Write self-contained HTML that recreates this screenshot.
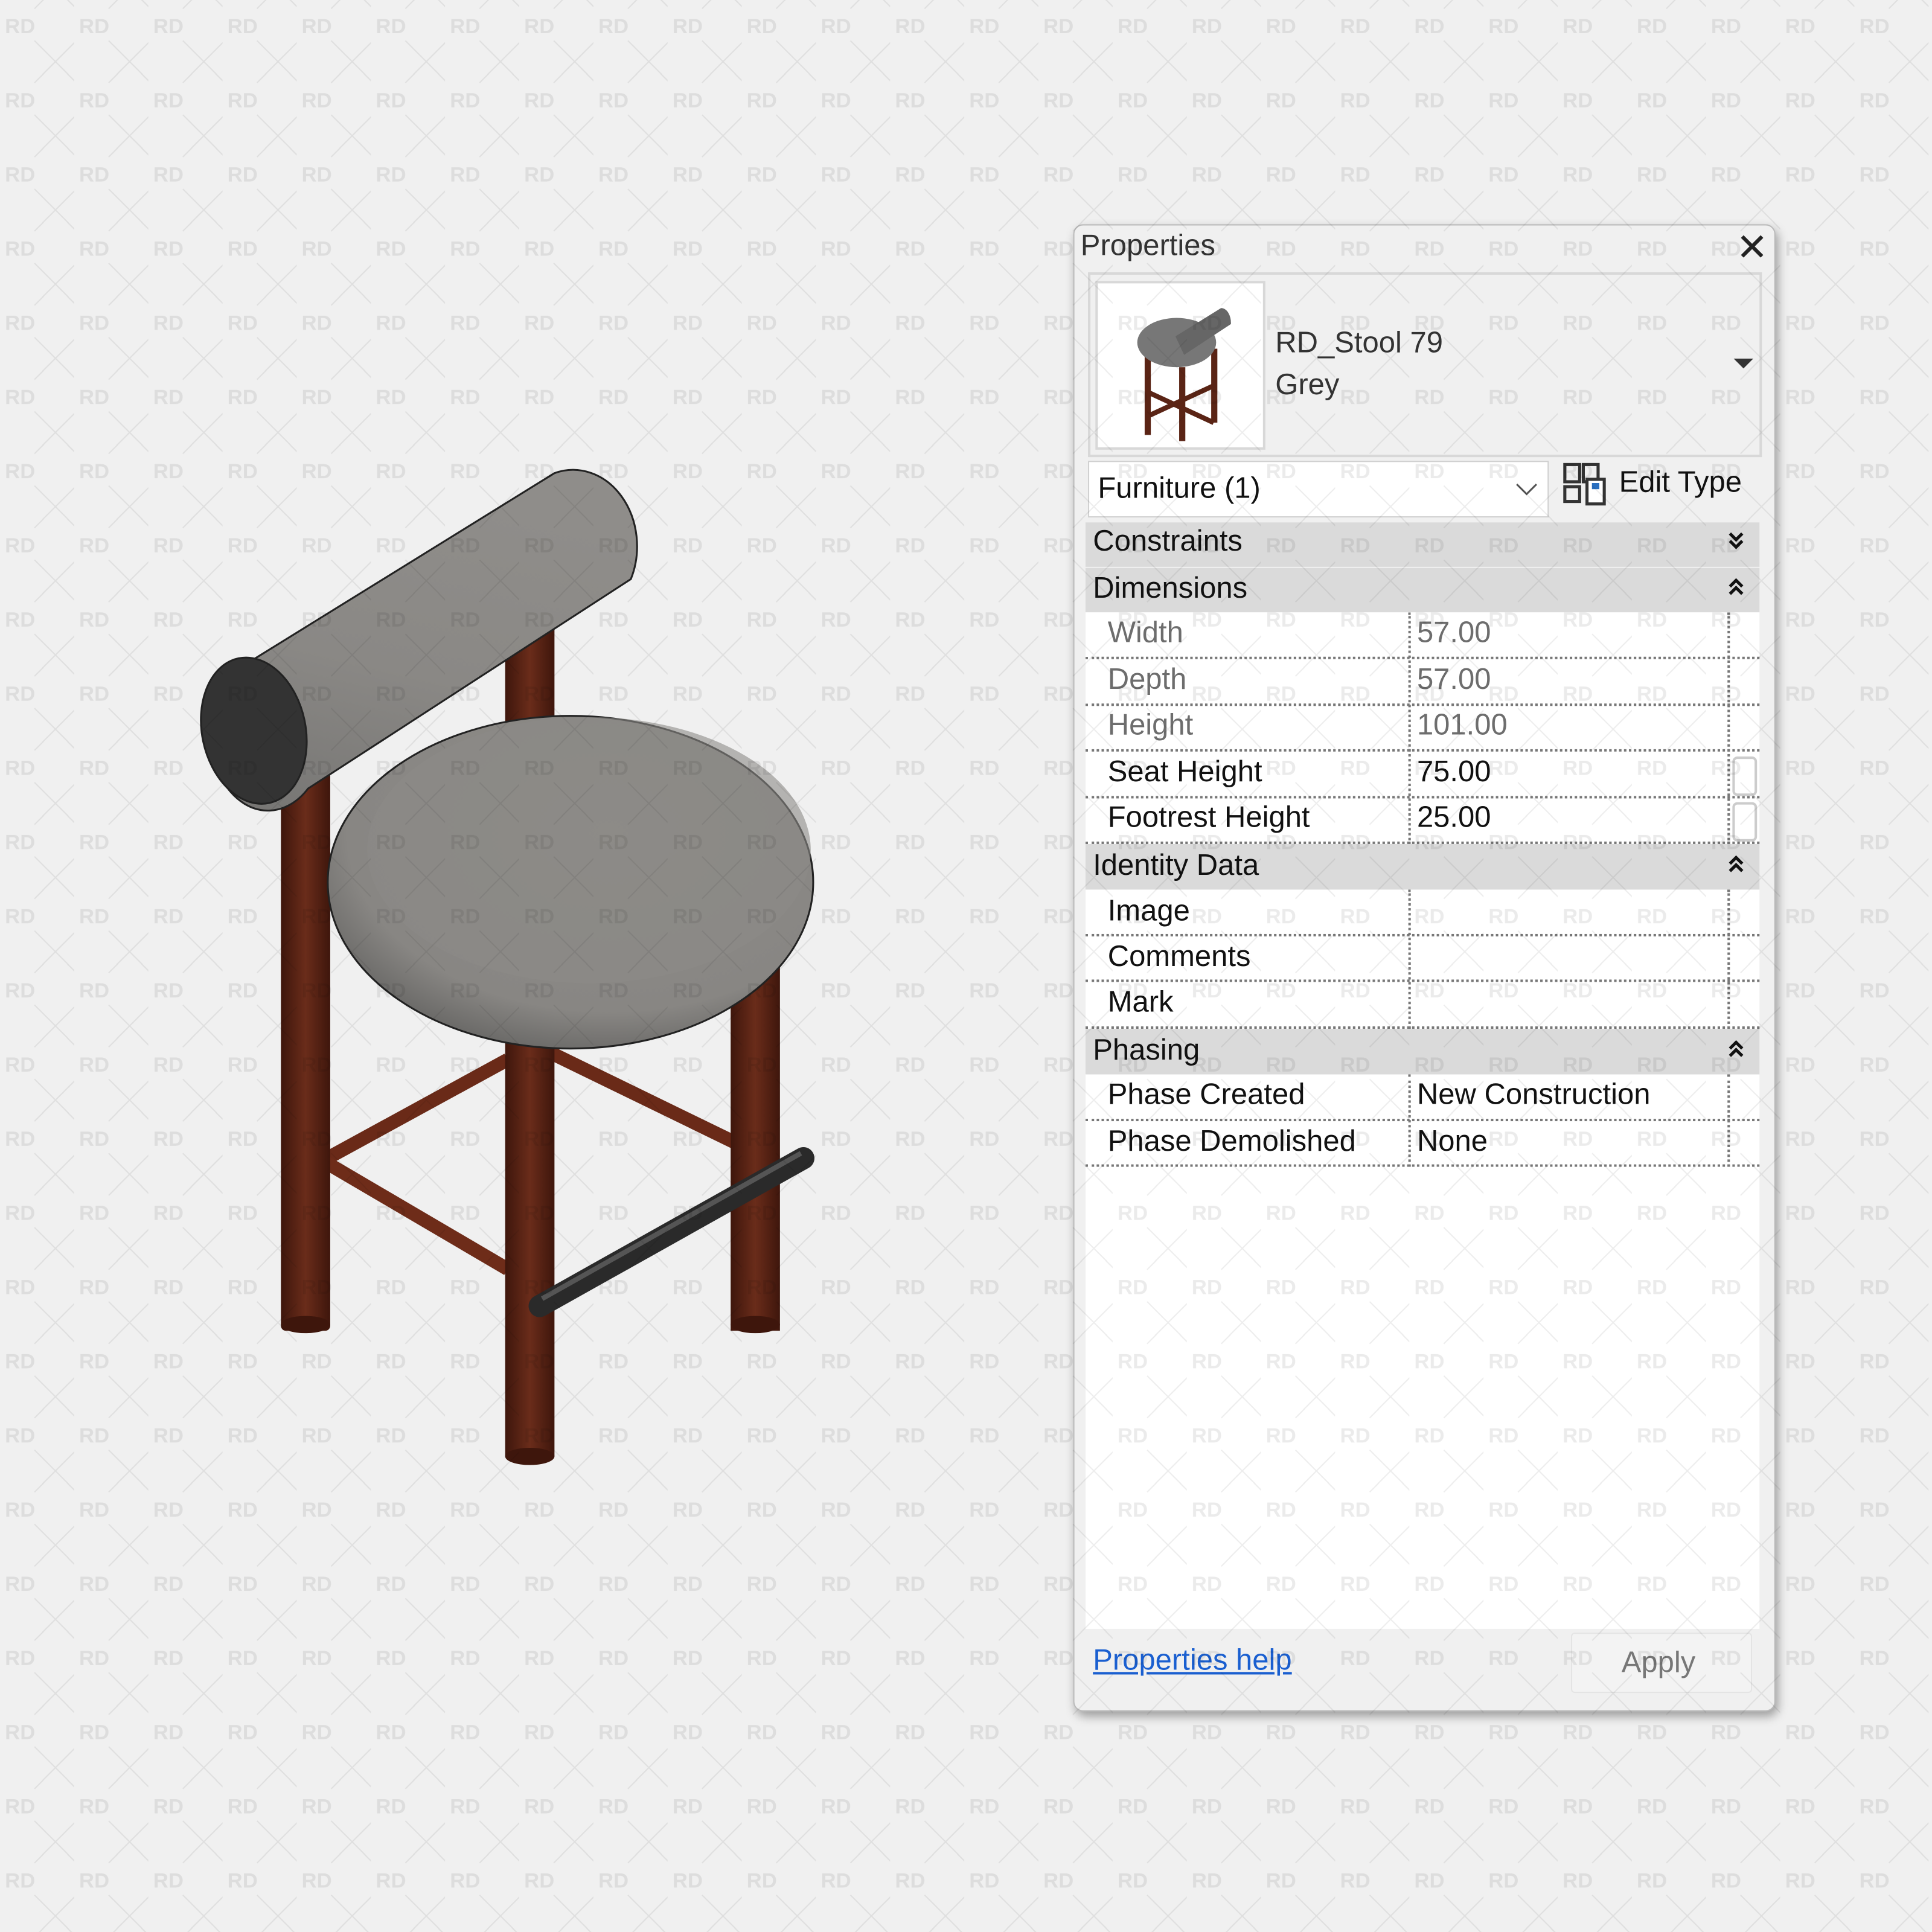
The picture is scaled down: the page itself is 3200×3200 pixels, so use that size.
<!DOCTYPE html>
<html><head><meta charset="utf-8"><style>
html,body{margin:0;padding:0;}
body{width:3200px;height:3200px;overflow:hidden;background:#f0f0f0;}
#w{position:absolute;left:0;top:0;width:1568px;height:1568px;transform:scale(2.040816);transform-origin:0 0;font-family:"Liberation Sans",sans-serif;}
.a{position:absolute;}
.t{position:absolute;font-size:24px;color:#111;white-space:nowrap;line-height:1;}
.g{color:#6d6d6d;}
.hdr{position:absolute;left:881px;width:547px;background:#dadada;}
.row{position:absolute;left:881px;width:547px;background:#fff;border-bottom:2px dotted #777;box-sizing:border-box;}
.vl{position:absolute;left:1143px;border-left:2px dotted #777;}
.vr{position:absolute;left:1402px;border-left:2px dotted #777;}
.ch{position:absolute;left:1402px;}
</style></head><body><div id="w">

<svg class="a" style="left:0;top:0" width="1568" height="1568" viewBox="0 0 1568 1568">
<defs>
<linearGradient id="wood" x1="0" x2="1"><stop offset="0" stop-color="#3e160c"/><stop offset="0.5" stop-color="#6a2c1a"/><stop offset="1" stop-color="#3e160c"/></linearGradient>
<radialGradient id="seat" cx="0.58" cy="0.35" r="0.75"><stop offset="0" stop-color="#8e8c88"/><stop offset="0.72" stop-color="#888683"/><stop offset="0.9" stop-color="#6a6967"/><stop offset="1" stop-color="#3c3c3b"/></radialGradient>
<linearGradient id="cyl" x1="0" y1="1" x2="0.3" y2="0"><stop offset="0" stop-color="#767573"/><stop offset="0.5" stop-color="#8a8885"/><stop offset="1" stop-color="#8f8d8a"/></linearGradient>
</defs>
<rect x="410" y="500" width="40" height="120" fill="url(#wood)"/>
<line x1="262" y1="942" x2="412" y2="860" stroke="#6a2a18" stroke-width="11"/>
<line x1="448" y1="855" x2="598" y2="928" stroke="#6a2a18" stroke-width="11"/>
<line x1="262" y1="942" x2="412" y2="1030" stroke="#6e2c19" stroke-width="11"/>
<rect x="228" y="600" width="40" height="480" rx="4" fill="url(#wood)"/>
<ellipse cx="248" cy="1075" rx="20" ry="7" fill="#3e160c"/>
<rect x="593" y="760" width="40" height="320" fill="url(#wood)"/>
<ellipse cx="613" cy="1075" rx="20" ry="7" fill="#3e160c"/>
<rect x="410" y="820" width="40" height="362" fill="url(#wood)"/>
<ellipse cx="430" cy="1182" rx="20" ry="7" fill="#3e160c"/>
<line x1="438" y1="1060" x2="652" y2="940" stroke="#2a2a2a" stroke-width="18" stroke-linecap="round"/>
<line x1="440" y1="1054" x2="650" y2="936" stroke="#555" stroke-width="4"/>
<path d="M185,548 L450,384 A52,62 0 0 1 512,470 L250,640 A44,60 0 0 1 185,548 Z" fill="url(#cyl)" stroke="#222" stroke-width="1.5"/>
<ellipse cx="206" cy="593" rx="42" ry="60" transform="rotate(-12 206 593)" fill="#333" stroke="#222" stroke-width="1.5"/>
<ellipse cx="463" cy="716" rx="197" ry="135" fill="url(#seat)" stroke="#222" stroke-width="1.5"/>
<ellipse cx="478" cy="690" rx="180" ry="108" fill="#8c8a87" opacity="0.6"/>
</svg>

<div class="a" style="left:871px;top:182px;width:568px;height:1205px;background:#f0f0f0;border:1px solid #bbb;border-radius:8px;box-shadow:2px 4px 8px rgba(0,0,0,0.35);"></div>
<div class="t" style="left:877px;top:188px;color:#333">Properties</div>
<svg class="a" style="left:1411px;top:189px" width="22" height="22"><path d="M3,3 L19,19 M19,3 L3,19" stroke="#222" stroke-width="3"/></svg>
<div class="a" style="left:883px;top:221px;width:543px;height:146px;border:2px solid #d8d8d8;"></div>
<div class="a" style="left:889px;top:228px;width:134px;height:133px;background:#fff;border:2px solid #d8d8d8;"></div>
<svg class="a" style="left:889px;top:228px" width="136" height="135">
<rect x="40" y="60" width="5" height="65" fill="#5a2415"/><rect x="94" y="55" width="5" height="60" fill="#5a2415"/><rect x="68" y="70" width="5" height="60" fill="#5a2415"/>
<line x1="42" y1="90" x2="96" y2="115" stroke="#5a2415" stroke-width="4"/><line x1="42" y1="110" x2="96" y2="85" stroke="#5a2415" stroke-width="4"/>
<ellipse cx="66" cy="50" rx="32" ry="20" fill="#777"/>
<path d="M65,45 L102,22 A8,12 0 0 1 110,35 L72,60 Z" fill="#666"/>
</svg>
<div class="t" style="left:1035px;top:267px;color:#333">RD_Stool 79</div>
<div class="t" style="left:1035px;top:301px;color:#333">Grey</div>
<svg class="a" style="left:1407px;top:291px" width="18" height="10"><path d="M0,0 L16,0 L8,8 Z" fill="#333"/></svg>

<div class="a" style="left:883px;top:374px;width:372px;height:44px;background:#fff;border:1px solid #d0d0d0;"></div>
<div class="t" style="left:891px;top:385px">Furniture (1)</div>
<svg class="a" style="left:1229px;top:390px" width="20" height="14"><path d="M2,3 L10,11 L18,3" stroke="#555" stroke-width="1.5" fill="none"/></svg>
<svg class="a" style="left:1268px;top:375px" width="38" height="36"><rect x="2" y="2" width="12" height="14" fill="none" stroke="#333" stroke-width="2.5"/><rect x="2" y="20" width="12" height="12" fill="none" stroke="#333" stroke-width="2.5"/><rect x="17" y="2" width="12" height="14" fill="none" stroke="#333" stroke-width="2.5"/><rect x="20" y="14" width="14" height="20" fill="#fff" stroke="#333" stroke-width="2.5"/><rect x="24" y="17" width="6" height="5" fill="#2a6fc0"/></svg>
<div class="t" style="left:1314px;top:380px">Edit Type</div>

<div class="hdr" style="top:424px;height:36px"></div><div class="t" style="left:887px;top:428px">Constraints</div>
<svg class="ch" style="top:431px" width="14" height="16"><path d="M2,2 L7,7 L12,2 M2,8 L7,13 L12,8" stroke="#111" stroke-width="2.5" fill="none"/></svg>
<div class="hdr" style="top:461px;height:36px"></div><div class="t" style="left:887px;top:466px">Dimensions</div>
<svg class="ch" style="top:469px" width="14" height="16"><path d="M2,7 L7,2 L12,7 M2,13 L7,8 L12,13" stroke="#111" stroke-width="2.5" fill="none"/></svg>

<div class="row" style="top:497px;height:38px"></div><div class="t g" style="left:899px;top:502px">Width</div><div class="t g" style="left:1150px;top:502px">57.00</div>
<div class="row" style="top:535px;height:38px"></div><div class="t g" style="left:899px;top:540px">Depth</div><div class="t g" style="left:1150px;top:540px">57.00</div>
<div class="row" style="top:573px;height:37px"></div><div class="t g" style="left:899px;top:577px">Height</div><div class="t g" style="left:1150px;top:577px">101.00</div>
<div class="row" style="top:610px;height:38px"></div><div class="t" style="left:899px;top:615px">Seat Height</div><div class="t" style="left:1150px;top:615px">75.00</div>
<div class="row" style="top:648px;height:37px"></div><div class="t" style="left:899px;top:652px">Footrest Height</div><div class="t" style="left:1150px;top:652px">25.00</div>
<div class="a" style="left:1406px;top:614px;width:16px;height:28px;border:2px solid #ccc;border-radius:4px;"></div>
<div class="a" style="left:1406px;top:651px;width:16px;height:28px;border:2px solid #ccc;border-radius:4px;"></div>
<div class="vl" style="top:497px;height:188px"></div><div class="vr" style="top:497px;height:188px"></div>

<div class="hdr" style="top:685px;height:37px"></div><div class="t" style="left:887px;top:691px">Identity Data</div>
<svg class="ch" style="top:694px" width="14" height="16"><path d="M2,7 L7,2 L12,7 M2,13 L7,8 L12,13" stroke="#111" stroke-width="2.5" fill="none"/></svg>
<div class="row" style="top:722px;height:38px"></div><div class="t" style="left:899px;top:728px">Image</div>
<div class="row" style="top:760px;height:37px"></div><div class="t" style="left:899px;top:765px">Comments</div>
<div class="row" style="top:797px;height:38px"></div><div class="t" style="left:899px;top:802px">Mark</div>
<div class="vl" style="top:722px;height:113px"></div><div class="vr" style="top:722px;height:113px"></div>

<div class="hdr" style="top:835px;height:37px"></div><div class="t" style="left:887px;top:841px">Phasing</div>
<svg class="ch" style="top:844px" width="14" height="16"><path d="M2,7 L7,2 L12,7 M2,13 L7,8 L12,13" stroke="#111" stroke-width="2.5" fill="none"/></svg>
<div class="row" style="top:872px;height:38px"></div><div class="t" style="left:899px;top:877px">Phase Created</div><div class="t" style="left:1150px;top:877px">New Construction</div>
<div class="row" style="top:910px;height:37px"></div><div class="t" style="left:899px;top:915px">Phase Demolished</div><div class="t" style="left:1150px;top:915px">None</div>
<div class="vl" style="top:872px;height:75px"></div><div class="vr" style="top:872px;height:75px"></div>

<div class="a" style="left:881px;top:947px;width:547px;height:375px;background:#fff;"></div>
<div class="t" style="left:887px;top:1336px;color:#1a5fd0;text-decoration:underline">Properties help</div>
<div class="a" style="left:1275px;top:1325px;width:145px;height:47px;background:#f3f3f3;border:1px solid #e4e4e4;border-radius:3px;"></div>
<div class="t" style="left:1316px;top:1338px;color:#777">Apply</div>

<svg class="a" style="left:0;top:0" width="1568" height="1568">
<defs><pattern id="p" width="60.2" height="60.2" patternUnits="userSpaceOnUse">
<text x="4" y="27" font-family="Liberation Sans" font-weight="bold" font-size="17" fill="rgba(0,0,0,0.08)">RD</text>
<path d="M28,33 L62,67 M62,33 L28,67 M28,-27 L62,7 M62,-27 L28,7" stroke="rgba(0,0,0,0.07)" stroke-width="1"/>
</pattern></defs>
<rect width="1568" height="1568" fill="url(#p)"/>
</svg>
</div></body></html>
